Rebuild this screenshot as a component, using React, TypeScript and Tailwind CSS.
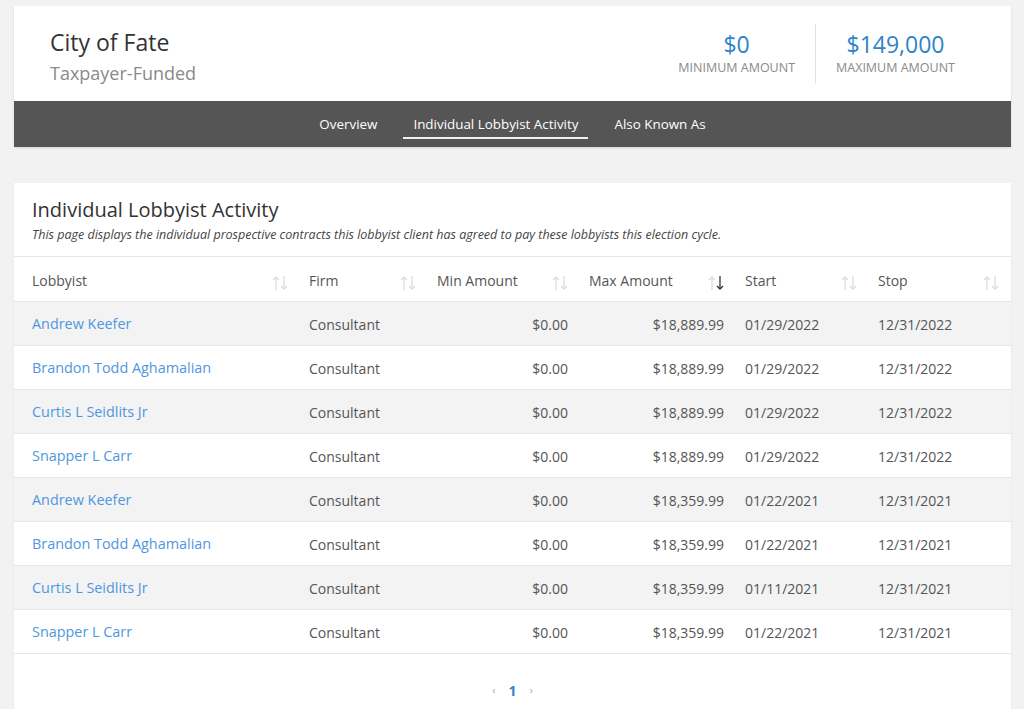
import React from "react";

const rows = [
  ["Andrew Keefer", "Consultant", "$0.00", "$18,889.99", "01/29/2022", "12/31/2022"],
  ["Brandon Todd Aghamalian", "Consultant", "$0.00", "$18,889.99", "01/29/2022", "12/31/2022"],
  ["Curtis L Seidlits Jr", "Consultant", "$0.00", "$18,889.99", "01/29/2022", "12/31/2022"],
  ["Snapper L Carr", "Consultant", "$0.00", "$18,889.99", "01/29/2022", "12/31/2022"],
  ["Andrew Keefer", "Consultant", "$0.00", "$18,359.99", "01/22/2021", "12/31/2021"],
  ["Brandon Todd Aghamalian", "Consultant", "$0.00", "$18,359.99", "01/22/2021", "12/31/2021"],
  ["Curtis L Seidlits Jr", "Consultant", "$0.00", "$18,359.99", "01/11/2021", "12/31/2021"],
  ["Snapper L Carr", "Consultant", "$0.00", "$18,359.99", "01/22/2021", "12/31/2021"],
];

function SortIcon({ active }: { active?: boolean }) {
  return (
    <svg width="18" height="18" viewBox="0 0 18 18" fill="none" strokeWidth="1.3" className="mt-[5px]">
      <g stroke="#dcdcdc">
        <path d="M5 16V3" />
        <path d="M2 6l3-3 3 3" />
      </g>
      <g stroke={active ? "#333333" : "#dcdcdc"}>
        <path d="M13 2v13" />
        <path d="M10 12l3 3 3-3" />
      </g>
    </svg>
  );
}

const cols = [
  { label: "Lobbyist", w: "w-[277px]", pr: "pr-[2px]" },
  { label: "Firm", w: "w-[128px]", pr: "pr-[2px]" },
  { label: "Min Amount", w: "w-[152px]", pr: "pr-[2px]" },
  { label: "Max Amount", w: "w-[156px]", pr: "pr-[2px]", active: true },
  { label: "Start", w: "w-[133px]", pr: "pr-[2px]" },
  { label: "Stop", w: "w-[151px]", pr: "pr-[11px]" },
];

export default function App() {
  return (
    <div
      className="min-h-[709px] bg-[#f2f2f2] pt-[6px] pb-[20px]"
      style={{ fontFamily: '"Open Sans", "Noto Sans", sans-serif' }}
    >
      <div className="ml-[14px] w-[997px] bg-white shadow-[0_1px_2px_rgba(0,0,0,0.12)]">
        <div className="flex h-[95px] items-center justify-between px-[36px]">
          <div className="mt-[4px] flex flex-col">
            <div className="text-[23px] leading-[30px] text-[#333]">City of Fate</div>
            <div className="mt-[4px] text-[18px] leading-[24px] text-[#8a8a8a]">Taxpayer-Funded</div>
          </div>
          <div className="flex items-center">
            <div className="flex h-[60px] flex-col items-center justify-center px-[20px]">
              <div className="text-[23px] leading-[26px] text-[#2d84c9]">$0</div>
              <div className="mt-[3px] text-[12.5px] leading-[16px] text-[#8a8a8a]">MINIMUM AMOUNT</div>
            </div>
            <div className="flex h-[60px] flex-col items-center justify-center border-l border-[#e3e3e3] px-[20px]">
              <div className="text-[23px] leading-[26px] text-[#2d84c9]">$149,000</div>
              <div className="mt-[3px] text-[12.5px] leading-[16px] text-[#8a8a8a]">MAXIMUM AMOUNT</div>
            </div>
          </div>
        </div>
        <div className="flex h-[46px] items-center justify-center gap-[16px] bg-[#555555] text-[13.4px] text-white">
          <div className="px-[10px] py-[10px]">Overview</div>
          <div className="relative px-[10px] py-[10px]">
            Individual Lobbyist Activity
            <div className="absolute bottom-[5px] left-0 right-0 h-[2px] bg-[#f0f0f0]" />
          </div>
          <div className="px-[10px] py-[10px]">Also Known As</div>
        </div>
      </div>

      <div className="ml-[14px] mt-[36px] w-[997px] bg-white shadow-[0_1px_2px_rgba(0,0,0,0.08)]">
        <div className="border-b border-[#e6e6e6] px-[18px] pb-[12px] pt-[14px]">
          <div className="text-[20px] leading-[26px] text-[#333]">Individual Lobbyist Activity</div>
          <div className="mt-[3px] text-[12.5px] italic leading-[18px] text-[#444]">
            This page displays the individual prospective contracts this lobbyist client has agreed to pay these lobbyists this election cycle.
          </div>
        </div>
        <div className="flex h-[45px] items-center border-b border-[#e6e6e6] pt-[2px] text-[14px] text-[#555]">
          {cols.map((c) => (
            <div key={c.label} className={`${c.w} ${c.pr} flex items-center justify-between pl-[18px]`}>
              <span>{c.label}</span>
              <SortIcon active={c.active} />
            </div>
          ))}
        </div>
        {rows.map((r, i) => (
          <div
            key={i}
            className={`flex h-[44px] items-center border-b border-[#e6e6e6] pt-[1px] text-[14px] text-[#555] ${
              i % 2 === 0 ? "bg-[#f3f3f3]" : "bg-white"
            }`}
          >
            <div className="w-[277px] pl-[18px] text-[14.4px] text-[#4f97de]">{r[0]}</div>
            <div className="w-[128px] pl-[18px]">{r[1]}</div>
            <div className="w-[152px] pl-[18px] pr-[3px] text-right">{r[2]}</div>
            <div className="w-[156px] pl-[18px] pr-[3px] text-right">{r[3]}</div>
            <div className="w-[133px] pl-[18px]">{r[4]}</div>
            <div className="w-[151px] pl-[18px]">{r[5]}</div>
          </div>
        ))}
        <div className="flex h-[72px] items-center justify-center gap-[13px]">
          <span className="text-[11px] text-[#aaa]">‹</span>
          <span className="text-[14px] font-bold text-[#2d84c9]">1</span>
          <span className="text-[11px] text-[#aaa]">›</span>
        </div>
      </div>
    </div>
  );
}
